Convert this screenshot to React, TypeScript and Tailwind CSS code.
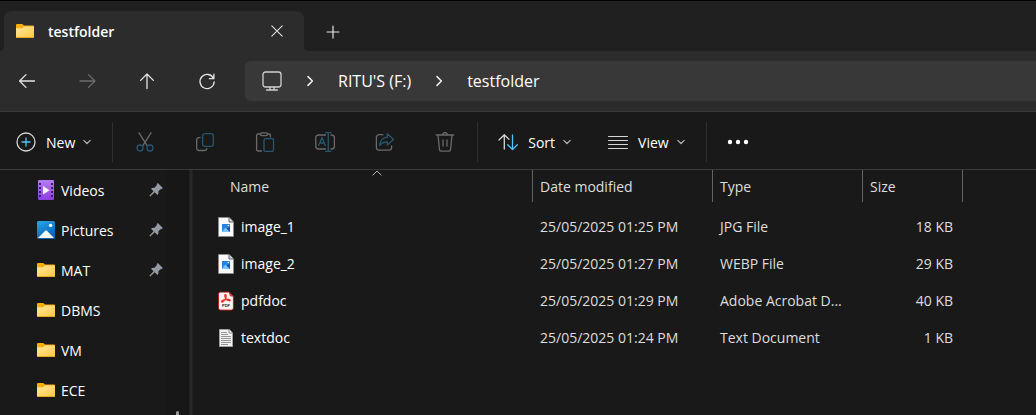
import type { ReactNode } from "react";

type IconProps = { children: ReactNode; className?: string };

function Glyph({ children, className = "size-5" }: IconProps) {
  return (
    <svg viewBox="0 0 20 20" fill="none" stroke="currentColor" strokeWidth="1.3" strokeLinecap="round" strokeLinejoin="round" className={`shrink-0 ${className}`} aria-hidden="true">
      {children}
    </svg>
  );
}

const MUTED = "#6a6a6a";
const BLUE = "#27566f";

function FolderIcon() {
  return (
    <svg viewBox="0 0 18 14" className="h-[14px] w-[18px] shrink-0" aria-hidden="true">
      <defs>
        <linearGradient id="folder" x1="0" y1="0" x2="1" y2="1">
          <stop offset="0" stopColor="#ffe8a0" />
          <stop offset="1" stopColor="#ffc83d" />
        </linearGradient>
      </defs>
      <path d="M0 1a1 1 0 0 1 1-1h5.2L8 1.6h9a1 1 0 0 1 1 1V8H0z" fill="#f9ae12" />
      <path d="M0 4.2h6.3L8 2.6h10V13a1 1 0 0 1-1 1H1a1 1 0 0 1-1-1z" fill="url(#folder)" />
      <path d="M0 13a1 1 0 0 0 1 1h16a1 1 0 0 0 1-1z" fill="#e9a820" />
    </svg>
  );
}

function VideosIcon() {
  return (
    <svg viewBox="0 0 18 20" className="h-5 w-[18px] shrink-0" aria-hidden="true">
      <defs>
        <linearGradient id="film" x1="0" y1="0" x2="0" y2="1">
          <stop offset="0" stopColor="#b67cf0" />
          <stop offset="1" stopColor="#8a3fe0" />
        </linearGradient>
      </defs>
      <rect x="1" width="16" height="20" rx="1.3" fill="url(#film)" />
      {[3, 7, 11, 15].map((y) => (
        <g key={y} fill="#3b1a78">
          <rect x="2" y={y} width="2" height="2" />
          <rect x="14" y={y} width="2" height="2" />
        </g>
      ))}
      <path d="M6 6v8.4l6.6-4.2z" fill="#f6f0ff" />
    </svg>
  );
}

function PicturesIcon() {
  return (
    <svg viewBox="0 0 18 18" className="size-[18px] shrink-0" aria-hidden="true">
      <defs>
        <linearGradient id="photo" x1="0" y1="0" x2="0.4" y2="1">
          <stop offset="0" stopColor="#2aa5ea" />
          <stop offset="1" stopColor="#0763b8" />
        </linearGradient>
      </defs>
      <rect width="18" height="18" rx="1.5" fill="url(#photo)" />
      <path d="M1 17l7.2-7.2a1.2 1.2 0 0 1 1.7 0L17 17z" fill="#f2f8fd" />
      <circle cx="13.6" cy="4.4" r="1.7" fill="#fff" />
    </svg>
  );
}

function PinIcon() {
  return (
    <svg viewBox="0 0 14 14" className="size-[14px] shrink-0" fill="#939ca5" aria-hidden="true">
      <path d="M8.2.6c.5-.4.9-.3 1.3.1l3.7 3.6c.5.5.5 1 0 1.4l-.5.4c-.5.3-.9 0-1.3.2L9.300 8.500c.3 1.500.1 2.500-.8 3.500L5.700 9.300 1.300 13.500.4 12.700l4.100-4.400L2 5.700c1-1 2.200-1.200 3.500-.9l2.300-2.500c.2-.6-.2-1.200.4-1.700z" />
    </svg>
  );
}

function ImageFileIcon() {
  return (
    <svg viewBox="0 0 16 20" className="h-5 w-4 shrink-0" aria-hidden="true">
      <path d="M.5.5h10.600l4.400 4.400v14.600H.5z" fill="#fafafa" stroke="#8b8b8b" />
      <path d="M11 .8v4.200h4.200" fill="#dcdcdc" stroke="#606060" />
      <rect x="4" y="7" width="8" height="8" fill="#2b80e0" />
      <path d="M4 14.500l3.500-4 4.500 4.500H4z" fill="#7cc4fb" />
      <path d="M8.500 11.500l3.500-2V15z" fill="#1558ad" />
      <circle cx="10.300" cy="8.500" r=".8" fill="#fff" />
    </svg>
  );
}

function PdfFileIcon() {
  return (
    <svg viewBox="0 0 16 20" className="h-5 w-4 shrink-0" aria-hidden="true">
      <path d="M2.500 1.100h8.200l4.700 4.400v11.600a2 2 0 0 1-2 2H2.500a2 2 0 0 1-2-2v-14a2 2 0 0 1 2-2z" fill="#faf5f4" stroke="#b3211a" />
      <path d="M10.500 1l5 4.800-3.500-.5z" fill="#d33a30" />
      <path d="M7.300 3.600c1.300 0 1 2.200.1 4.100-.9 1.800-2.200 3.500-3.400 3.300-1.300-.4.200-1.800 3.300-2.400 2.700-.6 5-.3 4.900.7-.1 1.100-2.500.5-4-1.300C6.900 6.500 6.200 3.700 7.300 3.600z" fill="none" stroke="#e8382d" strokeWidth="1.300" />
      <text x="8" y="16" textAnchor="middle" fontSize="4" fontWeight="700" fontFamily="Liberation Sans, sans-serif" fill="#222">PDF</text>
    </svg>
  );
}

function TextFileIcon() {
  return (
    <svg viewBox="0 0 16 20" className="h-5 w-4 shrink-0" aria-hidden="true">
      <path d="M1.500 1.500h9.600l3.400 3.400v13.600h-13z" fill="#f1f1f1" stroke="#a0a0a0" />
      <path d="M11 1.500V5h3.500" fill="#fff" stroke="#858585" />
      <path d="M3 4.500h6M3 6.500h7M3 8.500h10M3 10.500h10M3 12.500h10M3 14.500h10M3 16.500h7" stroke="#949494" />
    </svg>
  );
}

function ChevronDown() {
  return (
    <svg viewBox="0 0 8 8" className="size-2 shrink-0" fill="none" stroke="#b5b5b5" strokeWidth="1.200" strokeLinecap="round" strokeLinejoin="round" aria-hidden="true">
      <path d="M.8 2.300L4 5.500l3.200-3.200" />
    </svg>
  );
}

function ChevronRight() {
  return (
    <svg viewBox="0 0 12 12" className="size-3 shrink-0" fill="none" stroke="#f0f0f0" strokeWidth="1.500" strokeLinecap="round" strokeLinejoin="round" aria-hidden="true">
      <path d="M4 1.600L8.400 6 4 10.400" />
    </svg>
  );
}

function Divider() {
  return <div className="h-10 w-px shrink-0 bg-[#2f2f2f]" />;
}

const navButtons = [
  { label: "Back", color: "text-[#e4e4e4]", icon: <path d="M17.500 10H3M9 3.600L2.600 10 9 16.400" /> },
  { label: "Forward", color: "text-[#6c6c6c]", icon: <path d="M3 10h14.500M11.500 3.600L17.900 10l-6.400 6.400" /> },
  { label: "Up", color: "text-[#e4e4e4]", icon: <path d="M10 17.500V3M3.600 9.400L10 3l6.400 6.400" /> },
  {
    label: "Refresh",
    color: "text-[#e4e4e4]",
    icon: <path d="M16.600 7.600A7.100 7.100 0 1 0 17.200 10.800M16.900 3.200v4.500h-4.500" />,
  },
];

const fileActions = [
  {
    label: "Cut",
    icon: (
      <>
        <path d="M4 .8l8.300 13M16 .8L7.700 13.800" stroke={MUTED} />
        <circle cx="5" cy="16" r="3" stroke={BLUE} />
        <circle cx="15" cy="16" r="3" stroke={BLUE} />
      </>
    ),
  },
  {
    label: "Copy",
    icon: (
      <>
        <path d="M5 5.600H4a2.300 2.300 0 0 0-2.300 2.300v8.300A2.300 2.300 0 0 0 4 18.500h5.600a2.300 2.300 0 0 0 2.300-2" stroke={MUTED} />
        <rect x="7.600" y="1.700" width="10.700" height="12.700" rx="2.300" stroke={BLUE} />
      </>
    ),
  },
  {
    label: "Paste",
    icon: (
      <>
        <path d="M6.500 19H3a1.400 1.400 0 0 1-1.400-1.400V3.400A1.400 1.400 0 0 1 3 2h2.500M12.500 2H14a1.400 1.400 0 0 1 1.400 1.400v1.400" stroke={MUTED} />
        <rect x="5.500" y=".8" width="7" height="2.800" rx="1.400" stroke={MUTED} />
        <rect x="9" y="6.600" width="9.500" height="12.700" rx="1.300" stroke={BLUE} />
      </>
    ),
  },
  {
    label: "Rename",
    icon: (
      <>
        <path d="M10.500 3H3.500A2.700 2.700 0 0 0 .8 5.700v8.600A2.700 2.700 0 0 0 3.500 17h7M16 3h.7a2.700 2.700 0 0 1 2.700 2.700v8.600a2.700 2.700 0 0 1-2.700 2.700H16" stroke={MUTED} />
        <path d="M3.700 13.500L7 5.500l3.300 8M4.700 11h4.600M13.300.7v18.600M10.700.7h5.200M10.700 19.300h5.200" stroke={BLUE} />
      </>
    ),
  },
  {
    label: "Share",
    icon: (
      <>
        <path d="M8 2.700H4A2.600 2.600 0 0 0 1.400 5.300V15.500A2.600 2.600 0 0 0 4 18.100h10a2.600 2.600 0 0 0 2.600-2.600V14" stroke={MUTED} />
        <path d="M12.300 1.700l6.200 5.700-6.200 5.700V10c-3.600-.2-6 1.200-7.600 3.600.3-4.800 2.900-8 7.600-8.500z" stroke={BLUE} />
      </>
    ),
  },
  {
    label: "Delete",
    icon: (
      <path d="M1.300 3h17.400M3 3l1.500 14.600A1.800 1.800 0 0 0 6.300 19.200h7.400a1.800 1.800 0 0 0 1.800-1.600L17 3M7.600 3a2.400 2.400 0 0 1 4.800 0M8 8v6M12 8v6" stroke={MUTED} />
    ),
  },
];

const places = [
  { name: "Videos", icon: <VideosIcon />, pinned: true },
  { name: "Pictures", icon: <PicturesIcon />, pinned: true },
  { name: "MAT", icon: <FolderIcon />, pinned: true },
  { name: "DBMS", icon: <FolderIcon />, pinned: false },
  { name: "VM", icon: <FolderIcon />, pinned: false },
  { name: "ECE", icon: <FolderIcon />, pinned: false },
];

const files = [
  { name: "image_1", icon: <ImageFileIcon />, date: "25/05/2025 01:25 PM", type: "JPG File", size: "18 KB" },
  { name: "image_2", icon: <ImageFileIcon />, date: "25/05/2025 01:27 PM", type: "WEBP File", size: "29 KB" },
  { name: "pdfdoc", icon: <PdfFileIcon />, date: "25/05/2025 01:29 PM", type: "Adobe Acrobat D...", size: "40 KB" },
  { name: "textdoc", icon: <TextFileIcon />, date: "25/05/2025 01:24 PM", type: "Text Document", size: "1 KB" },
];

function TitleBar() {
  return (
    <div className="flex items-end border-t border-black bg-[#202020] pt-[10px]">
      <svg viewBox="0 0 4 4" className="size-1 shrink-0" fill="#2c2c2c" aria-hidden="true">
        <path d="M4 0v4H0a4 4 0 0 0 4-4z" />
      </svg>
      <div className="flex h-10 w-[300px] items-center rounded-t-lg bg-[#2c2c2c] pr-[17px] pl-3 text-white">
        <FolderIcon />
        <span className="mt-0.5 ml-[14px] flex-1 font-semibold">testfolder</span>
        <button type="button" aria-label="Close tab" className="flex size-5 items-center justify-center">
          <Glyph className="size-4">
            <path d="M3.500 3.500l13 13M16.500 3.500l-13 13" stroke="#e4e4e4" />
          </Glyph>
        </button>
      </div>
      <svg viewBox="0 0 4 4" className="size-1 shrink-0" fill="#2c2c2c" aria-hidden="true">
        <path d="M0 0v4h4a4 4 0 0 1-4-4z" />
      </svg>
      <button type="button" aria-label="New tab" className="ml-[15px] flex h-10 w-5 items-center justify-center pt-0.5">
        <Glyph className="size-4">
          <path d="M10 2.500v15M2.500 10h15" stroke="#e4e4e4" strokeWidth="1.500" />
        </Glyph>
      </button>
    </div>
  );
}

function NavBar() {
  return (
    <div className="flex h-[60px] items-center bg-[#2c2c2c]">
      <nav className="flex gap-5 pl-[7px]" aria-label="History">
        {navButtons.map((b) => (
          <button key={b.label} type="button" aria-label={b.label} className={`flex size-10 items-center justify-center ${b.color}`}>
            <Glyph>{b.icon}</Glyph>
          </button>
        ))}
      </nav>
      <div className="ml-[18px] flex h-10 flex-1 items-center rounded-l-md bg-[#383838] pl-[17px] text-base text-white">
        <button type="button" aria-label="This PC">
          <Glyph>
            <rect x="1" y="1" width="18" height="15" rx="2.500" stroke="#cfcfcf" />
            <path d="M8 16v3M12 16v3M4.500 19h11" stroke="#cfcfcf" />
          </Glyph>
        </button>
        <span className="mx-[22px]"><ChevronRight /></span>
        <button type="button">RITU'S (F:)</button>
        <span className="mx-[22px]"><ChevronRight /></span>
        <button type="button">testfolder</button>
      </div>
    </div>
  );
}

function Toolbar() {
  return (
    <div className="flex h-[59px] items-center border-y border-[#3a3a3a] pt-[3px] text-white">
      <button type="button" className="mr-[21px] flex items-center pl-4">
        <Glyph>
          <circle cx="10" cy="10" r="9" stroke="#d6d6d6" />
          <path d="M10 6v8M6 10h8" stroke="#4cc2ff" />
        </Glyph>
        <span className="mt-0.5 mr-2 ml-[10px]">New</span>
        <ChevronDown />
      </button>
      <Divider />
      <div className="mx-3 flex gap-5">
        {fileActions.map((a) => (
          <button key={a.label} type="button" aria-label={a.label} className="flex size-10 items-center justify-center">
            <Glyph>{a.icon}</Glyph>
          </button>
        ))}
      </div>
      <Divider />
      <button type="button" className="ml-5 flex items-center">
        <Glyph>
          <path d="M6.300 17V3M1 8l5.300-5.300L11 7.400" stroke="#d6d6d6" />
          <path d="M14.500 3v14.300M9.700 12.700l4.800 4.800 4.800-4.800" stroke="#4cc2ff" />
        </Glyph>
        <span className="mt-0.5 mr-2 ml-[10px]">Sort</span>
        <ChevronDown />
      </button>
      <button type="button" className="ml-[37px] flex items-center">
        <Glyph>
          <path d="M.5 4.500h19M.5 8.500h19M.5 12.500h19M.5 16.500h19" stroke="#d6d6d6" strokeWidth="1" />
        </Glyph>
        <span className="mt-0.5 mr-2 ml-[10px]">View</span>
        <ChevronDown />
      </button>
      <div className="ml-[21px]"><Divider /></div>
      <button type="button" aria-label="See more" className="ml-5 flex h-10 items-center">
        <svg viewBox="0 0 22 20" className="h-5 w-[22px]" fill="#fff" aria-hidden="true">
          <circle cx="3" cy="10" r="2.200" />
          <circle cx="11" cy="10" r="2.200" />
          <circle cx="19" cy="10" r="2.200" />
        </svg>
      </button>
    </div>
  );
}

function Sidebar() {
  return (
    <aside className="flex w-[193px] shrink-0">
      <nav className="flex-1" aria-label="Quick access">
        {places.map((p) => (
          <a key={p.name} href="#" className="flex h-10 items-center pr-1 pl-[37px] text-white">
            {p.icon}
            <span className="mt-0.5 ml-[6px] flex-1">{p.name}</span>
            {p.pinned && <PinIcon />}
          </a>
        ))}
      </nav>
      <div className="w-[22px] bg-[#171717] pt-[241px] pl-[9px]">
        <div className="h-full w-[3px] rounded-t-full bg-[#9a9a9a]" />
      </div>
      <div className="w-1 border-x border-[#202020] bg-[#282828]" />
    </aside>
  );
}

function HeaderCell({ children, className }: { children: ReactNode; className: string }) {
  return (
    <th scope="col" className="p-0 pb-[6px] text-left font-normal">
      <div className={`relative flex h-8 items-center border-r border-[#636363] pt-[2px] ${className}`}>{children}</div>
    </th>
  );
}

function FileTable() {
  return (
    <main className="min-w-0 flex-1">
      <table className="w-[770px] table-fixed border-collapse text-[#dedede]">
        <colgroup>
          <col className="w-[340px]" />
          <col className="w-[180px]" />
          <col className="w-[150px]" />
          <col className="w-[100px]" />
        </colgroup>
        <thead>
          <tr>
            <HeaderCell className="ml-[29px] pl-2">
              Name
              <svg viewBox="0 0 10 6" className="absolute top-0 left-1/2 h-[6px] w-[10px] -translate-x-1/2" fill="none" stroke="#b0b0b0" aria-hidden="true">
                <path d="M.6 5.400L5 1l4.400 4.400" />
              </svg>
            </HeaderCell>
            <HeaderCell className="pl-[7px]">Date modified</HeaderCell>
            <HeaderCell className="pl-[7px]">Type</HeaderCell>
            <HeaderCell className="pl-[7px]">Size</HeaderCell>
          </tr>
        </thead>
        <tbody>
          {files.map((f) => (
            <tr key={f.name} className="h-[37px]">
              <td className="p-0 pl-[25px]">
                <div className="flex items-center gap-[7px] text-white">
                  {f.icon}
                  <span>{f.name}</span>
                </div>
              </td>
              <td className="p-0 pl-[7px]">{f.date}</td>
              <td className="p-0 pl-[7px]">{f.type}</td>
              <td className="p-0 pr-[10px] text-right">{f.size}</td>
            </tr>
          ))}
        </tbody>
      </table>
    </main>
  );
}

export default function App() {
  return (
    <div className="flex min-h-screen flex-col bg-[#191919] font-['Open_Sans','Noto_Sans',sans-serif] text-sm whitespace-nowrap">
      <TitleBar />
      <NavBar />
      <Toolbar />
      <div className="flex flex-1">
        <Sidebar />
        <FileTable />
      </div>
    </div>
  );
}
